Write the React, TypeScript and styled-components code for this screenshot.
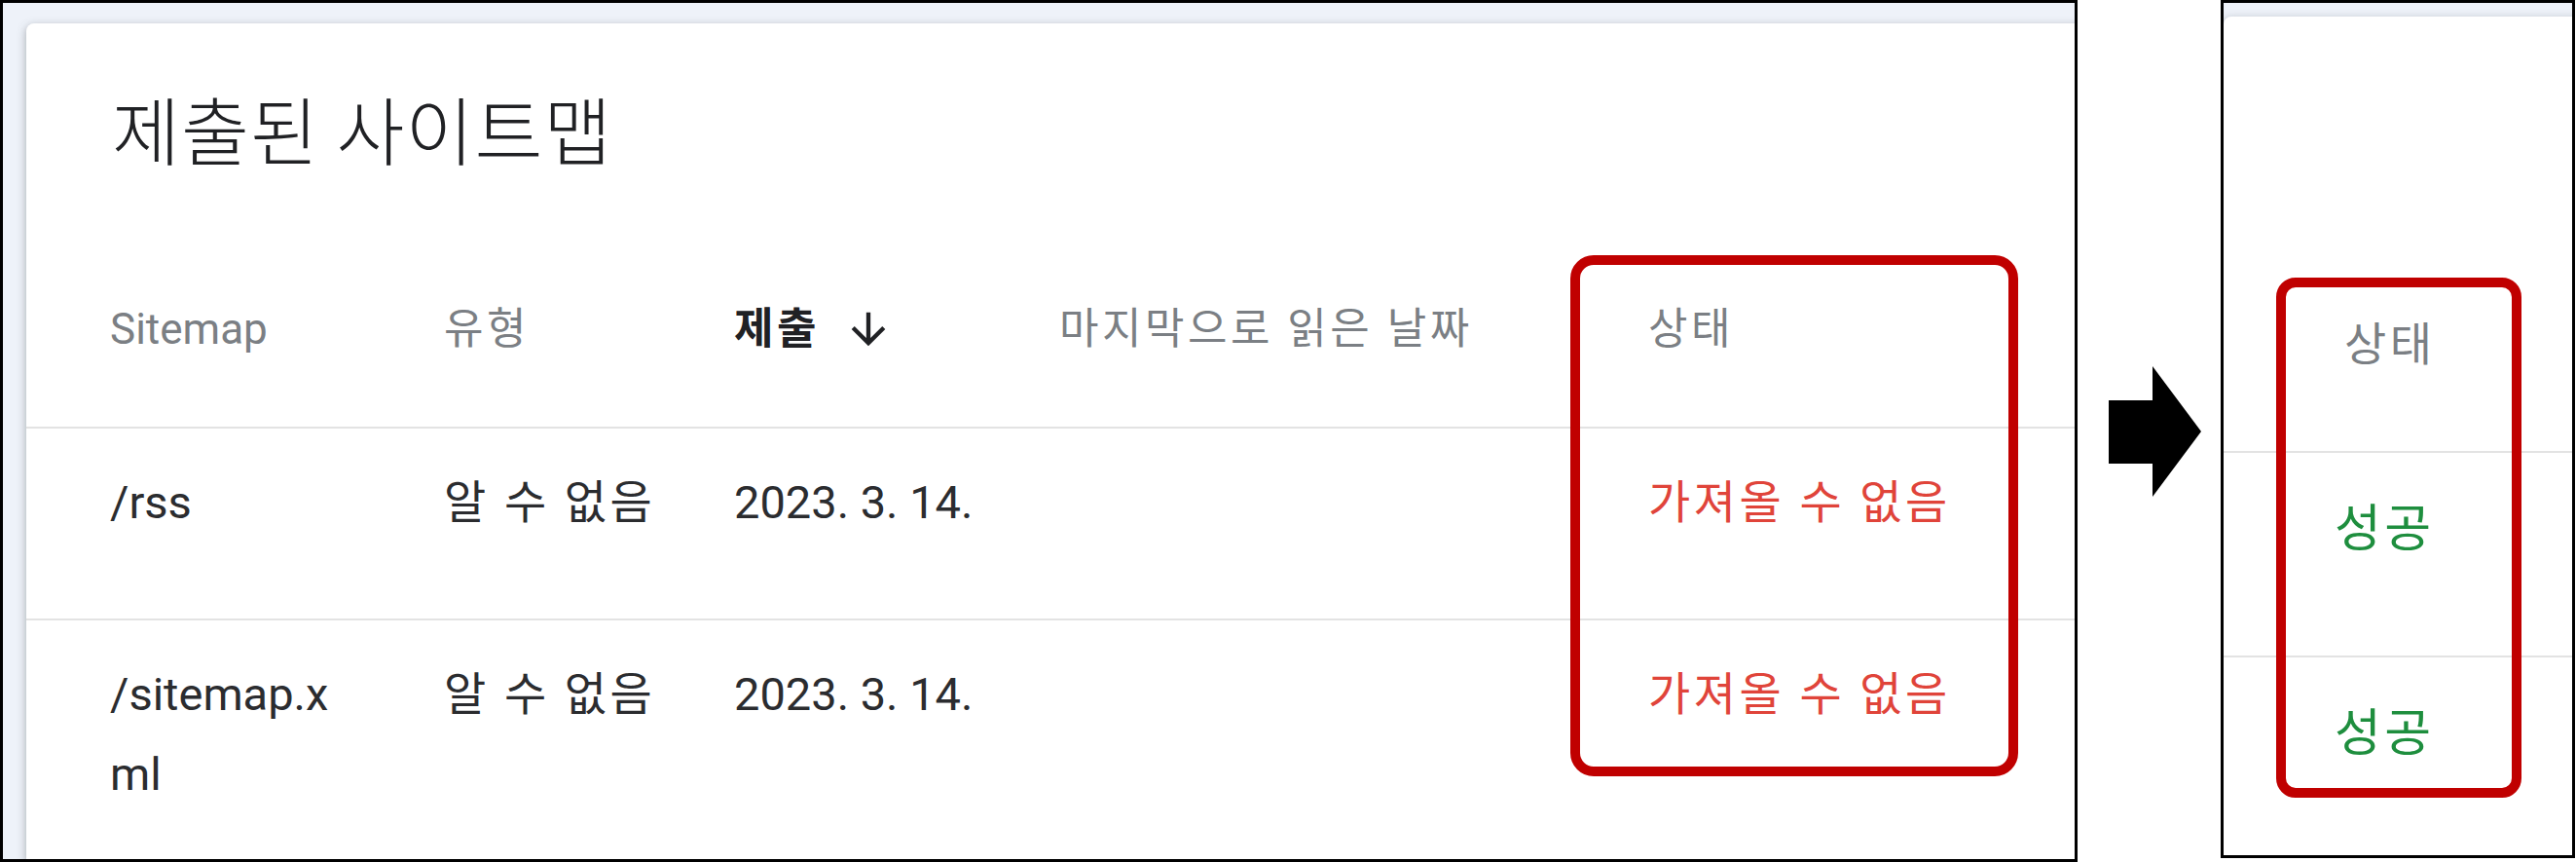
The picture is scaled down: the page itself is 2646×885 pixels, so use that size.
import React from 'react';
import styled, { createGlobalStyle } from 'styled-components';

const GlobalStyle = createGlobalStyle`
  html, body {
    margin: 0;
    padding: 0;
    background: #ffffff;
  }
  body {
    font-family: Roboto, "Noto Sans CJK KR", sans-serif;
  }
`;

const Page = styled.div`
  width: 2646px;
  height: 885px;
  display: flex;
  align-items: flex-start;
  overflow: hidden;
`;

const Frame = styled.div<{ $w: number; $h: number; $top: number; $left: number }>`
  position: relative;
  box-sizing: border-box;
  flex-shrink: 0;
  width: ${({ $w }) => $w}px;
  height: ${({ $h }) => $h}px;
  padding: ${({ $top, $left }) => `${$top}px 0 0 ${$left}px`};
  border: 3px solid #000;
  background: #eef2f9;
  overflow: hidden;
`;

const Card = styled.div`
  width: calc(100% + 80px);
  height: 100%;
  background: #fff;
  border-top-left-radius: 8px;
  box-shadow: 0 3px 6px rgba(60, 64, 67, 0.25), 0 3px 10px 3px rgba(60, 64, 67, 0.12);
`;

const Title = styled.h2`
  margin: 0;
  padding: 57px 0 0 88px;
  height: 157px;
  box-sizing: border-box;
  font-family: "Noto Sans CJK KR", sans-serif;
  font-size: 76px;
  font-weight: 300;
  letter-spacing: 1px;
  line-height: 100px;
  color: #202124;
`;

const Grid = styled.div<{ $cols: string }>`
  display: grid;
  grid-template-columns: ${({ $cols }) => $cols};
`;

const HeaderRow = styled(Grid)<{ $h: number; $pad: number; $indent: number }>`
  height: ${({ $h }) => $h}px;
  padding: ${({ $pad, $indent }) => `${$pad}px 0 0 ${$indent}px`};
  box-sizing: border-box;
  align-items: center;
`;

// Hangul in the original is set a little looser than Noto Sans CJK, hence $ko
const HeadCell = styled.div<{ $size: number; $ko?: boolean }>`
  font-size: ${({ $size }) => $size}px;
  letter-spacing: ${({ $ko }) => ($ko ? '3.5px' : 'normal')};
  line-height: 60px;
  color: #7b7f84;
  white-space: nowrap;
`;

const SortHead = styled(HeadCell)`
  display: flex;
  align-items: center;
  gap: 24px;
  font-weight: 700;
  color: #202124;
`;

const Row = styled(Grid)<{ $h: number; $pad: number; $indent: number }>`
  min-height: ${({ $h }) => $h}px;
  box-sizing: border-box;
  padding: ${({ $pad, $indent }) => `${$pad}px 0 0 ${$indent}px`};
  border-top: 2px solid #e3e3e3;
  align-items: start;
`;

const Cell = styled.div<{ $size: number; $ko?: boolean; $tone?: 'red' | 'green' }>`
  font-size: ${({ $size }) => $size}px;
  letter-spacing: ${({ $ko }) => ($ko ? '3.5px' : 'normal')};
  line-height: 82px;
  white-space: nowrap;
  color: ${({ $tone }) => ($tone === 'red' ? '#e0443a' : $tone === 'green' ? '#1e8e3e' : '#2b2c2f')};
`;

const PathCell = styled(Cell)`
  max-width: 250px;
  white-space: normal;
  word-break: break-all;
`;

const Highlight = styled.div<{ $x: number; $y: number; $w: number; $h: number; $r: number }>`
  position: absolute;
  left: ${({ $x }) => $x}px;
  top: ${({ $y }) => $y}px;
  width: ${({ $w }) => $w}px;
  height: ${({ $h }) => $h}px;
  box-sizing: border-box;
  border: 10px solid #c00000;
  border-radius: ${({ $r }) => $r}px;
`;

const ArrowWrap = styled.div`
  align-self: center;
  margin: 0 20px 0 32px;
  line-height: 0;
`;

const SortIcon = () => (
  <svg width="52" height="52" viewBox="0 0 24 24" fill="#202124">
    <path d="M20 12l-1.41-1.41L13 16.17V4h-2v12.17l-5.58-5.59L4 12l8 8 8-8z" />
  </svg>
);

const BigArrow = () => (
  <svg width="95" height="134" viewBox="0 0 95 134">
    <polygon points="0,35 45,35 45,0 95,67 45,134 45,100 0,100" fill="#000" />
  </svg>
);

const leftCols = '343px 298px 334px 605px 1fr';

const sitemaps = [
  { path: '/rss', type: '알 수 없음', date: '2023. 3. 14.' },
  { path: '/sitemap.xml', type: '알 수 없음', date: '2023. 3. 14.' },
];

export default function App() {
  return (
    <>
      <GlobalStyle />
      <Page>
        <Frame $w={2134} $h={885} $top={21} $left={24}>
          <Card>
            <Title>제출된 사이트맵</Title>
            <HeaderRow $cols={leftCols} $h={257} $pad={56} $indent={86}>
              <HeadCell $size={44}>Sitemap</HeadCell>
              <HeadCell $size={44} $ko>유형</HeadCell>
              <SortHead $size={44} $ko>
                제출 <SortIcon />
              </SortHead>
              <HeadCell $size={44} $ko>마지막으로 읽은 날짜</HeadCell>
              <HeadCell $size={44} $ko>상태</HeadCell>
            </HeaderRow>
            {sitemaps.map((s) => (
              <Row key={s.path} $cols={leftCols} $h={197} $pad={35} $indent={86}>
                <PathCell $size={47}>{s.path}</PathCell>
                <Cell $size={47} $ko>{s.type}</Cell>
                <Cell $size={47}>{s.date}</Cell>
                <Cell $size={47} />
                <Cell $size={47} $ko $tone="red">가져올 수 없음</Cell>
              </Row>
            ))}
          </Card>
          <Highlight $x={1610} $y={259} $w={460} $h={535} $r={24} />
        </Frame>

        <ArrowWrap>
          <BigArrow />
        </ArrowWrap>

        <Frame $w={364} $h={881} $top={14} $left={0}>
          <Card>
            <HeaderRow $cols="1fr" $h={446} $pad={228} $indent={124}>
              <HeadCell $size={47} $ko>상태</HeadCell>
            </HeaderRow>
            {[0, 1].map((i) => (
              <Row key={i} $cols="1fr" $h={210} $pad={38} $indent={114}>
                <Cell $size={52} $ko $tone="green">성공</Cell>
              </Row>
            ))}
          </Card>
          <Highlight $x={54} $y={282} $w={252} $h={534} $r={20} />
        </Frame>
      </Page>
    </>
  );
}
